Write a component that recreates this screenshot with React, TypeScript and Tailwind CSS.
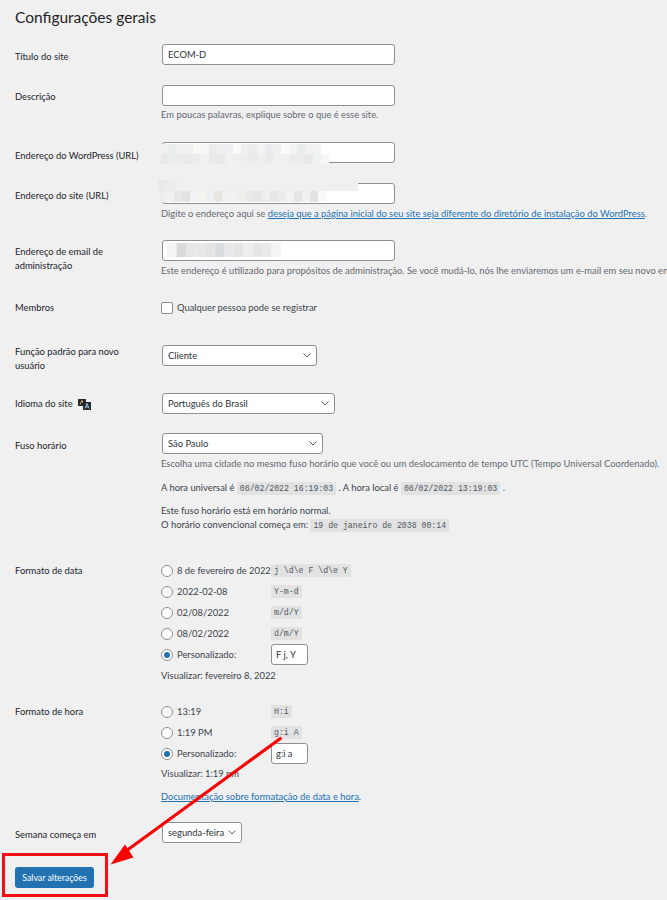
import type { ReactNode } from 'react';

const Row = ({ label, className, children }: { label: ReactNode; className: string; children: ReactNode }) => (
  <div className={`flex ${className}`}>
    <div className="w-[147px] shrink-0 pr-3 text-[#1d2327]">{label}</div>
    <div className="min-w-0 flex-1 whitespace-nowrap">{children}</div>
  </div>
);

const TextBox = ({ value = '', className = 'w-[233px] px-[5px]' }: { value?: string; className?: string }) => (
  <div className={`flex h-[21px] items-center rounded-[3px] border border-[#8c8f94] bg-white text-[#2c3338] ${className}`}>
    {value}
  </div>
);

const SelectBox = ({ value, className }: { value: string; className: string }) => (
  <div className={`flex h-[21px] items-center justify-between rounded-[3px] border border-[#8c8f94] bg-white pl-[5px] pr-[5px] text-[#2c3338] ${className}`}>
    <span>{value}</span>
    <svg width="8" height="5" viewBox="0 0 8 5" fill="none" stroke="#50575e" strokeWidth="1">
      <path d="M.5.5L4 4 7.500.5" />
    </svg>
  </div>
);

const Hint = ({ children, className = '' }: { children: ReactNode; className?: string }) => (
  <p className={`-ml-px leading-[13px] text-[#646970] ${className}`}>{children}</p>
);

const Code = ({ children }: { children: ReactNode }) => (
  <code className="bg-[#e2e2e3] px-[3px] py-[2px] font-['Liberation_Mono',monospace] text-[8.200px] leading-[9px] text-[#50575e]">{children}</code>
);

const Radio = ({ label, format, checked }: { label: string; format?: string; checked?: boolean }) => (
  <div className="flex h-[21px] items-center">
    <span className="-ml-px flex h-[12px] w-[12px] shrink-0 items-center justify-center rounded-full border border-[#8c8f94] bg-white">
      {checked && <span className="h-[6px] w-[6px] rounded-full bg-[#2271b1]" />}
    </span>
    <span className="ml-[4px] w-[94px] text-[#3c434a]">{label}</span>
    {format && <Code>{format}</Code>}
  </div>
);

// pixelated smudges that hide the URLs in the screenshot, one row of cells per line
const Smudge = ({ className, rows, cell, height }: { className: string; rows: string[][]; cell: number; height: number }) => (
  <svg className={`absolute ${className}`} width={Math.max(...rows.map((r) => r.length)) * cell} height={rows.length * height}>
    {rows.map((row, y) =>
      row.map((fill, x) => <rect key={`${y}-${x}`} x={x * cell} y={y * height} width={cell} height={height} fill={fill} />),
    )}
  </svg>
);

const wpTop = ['#f2f0ee', '#eaedf0', '#f0f0f0', '#eef0f2', '#f9f8f5', '#f5f6f7', '#ebecec', '#eeeeee', '#eceef1', '#fafafa', '#eff1f0', '#ebedec', '#f3f3f3', '#ebebf0', '#efefef', '#fafafa', '#f3f3f3', '#ebecee', '#f3f0f1', '#f0f2f4'];
const wpBottom = ['#e9e9e9', '#ecedee', '#ebebec', '#e9eaec', '#ececec', '#f2f2f2', '#e9ebea', '#e8e8e8', '#f0f1f1', '#eeeff0', '#edeeee', '#e9ebeb', '#eeeff1', '#e9eaea', '#f0f0f1', '#eff0f1', '#ebebec', '#ececec', '#e9e9e9', '#f0f1f2', '#f6f6f6'];
const siteTop = ['#e9e9e9', '#ececec', '#eeeeee', ...Array<string>(22).fill('#efefef')];
const siteBottom = ['#eeeeef', '#f0f1f1', '#e6e7e8', '#e2e3e3', '#f1f2f3', '#f4f4f1', '#eeeff1', '#e8e6e3', '#eff0f2', '#f1f1f2', '#eeeeea', '#e9e9e8', '#e5e6e5', '#eceef0', '#e5e6e7', '#eaecea', '#f2f2f2', '#e5e6e6', '#eff0f1', '#e3e3e3', '#f8f9f8'];
const emailRow = ['#f4f4f4', '#d9d9da', '#e6e6e6', '#e8e8e8', '#e3e3e3', '#d9dddf', '#e8e9e9', '#e3e4e5', '#eeeeee', '#e4e6e7', '#eaeaea', '#f5f5f5'];

export default function App() {
  return (
    <div className="relative h-[900px] w-[667px] overflow-hidden bg-[#f0f0f1] pl-[15px] font-['Lato',sans-serif] text-[9.400px] leading-[14px] text-[#3c434a]">
      <h1 className="pt-[8px] text-[15.500px] leading-[19px] text-[#1d2327]">Configurações gerais</h1>

      <Row label={<div className="pt-[6px]">Título do site</div>} className="mt-[17px]">
        <TextBox value="ECOM-D" />
      </Row>

      <Row label={<div className="pt-[5px]">Descrição</div>} className="mt-[20px]">
        <TextBox />
        <Hint className="mt-[2px]">Em poucas palavras, explique sobre o que é esse site.</Hint>
      </Row>

      <Row label={<div className="pt-[7px]">Endereço do WordPress (URL)</div>} className="mt-[21px]">
        <div className="relative">
          <TextBox />
          <Smudge className="left-[-1px] top-[2px]" rows={[wpTop, wpBottom]} cell={8} height={10} />
        </div>
      </Row>

      <Row label={<div className="pt-[6px]">Endereço do site (URL)</div>} className="mt-[20px]">
        <div className="relative">
          <TextBox />
          <Smudge className="left-[-4px] top-[-3px]" rows={[siteTop, siteBottom]} cell={8} height={11} />
        </div>
        <Hint className="mt-[3px]">
          Digite o endereço aqui se{' '}
          <a className="text-[#2271b1] underline">deseja que a página inicial do seu site seja diferente do diretório de instalação do WordPress</a>.
        </Hint>
      </Row>

      <Row label={<div className="pt-[5px]">Endereço de email de administração</div>} className="mt-[20px]">
        <div className="relative">
          <TextBox />
          <Smudge className="left-[5px] top-[3px]" rows={[emailRow]} cell={9.500} height={14} />
        </div>
        <Hint className="mt-[3px]">Este endereço é utilizado para propósitos de administração. Se você mudá-lo, nós lhe enviaremos um e-mail em seu novo endereço para confirmar.</Hint>
      </Row>

      <Row label="Membros" className="mt-[24px]">
        <div className="flex items-center">
          <span className="-ml-px h-[12px] w-[12px] rounded-[2px] border border-[#8c8f94] bg-white" />
          <span className="ml-[4px]">Qualquer pessoa pode se registrar</span>
        </div>
      </Row>

      <Row label="Função padrão para novo usuário" className="mt-[30px]">
        <SelectBox value="Cliente" className="w-[155px]" />
      </Row>

      <Row
        label={
          <div className="flex items-center gap-[5px] pt-[4px]">
            Idioma do site
            <svg width="13" height="11" viewBox="0 0 13 11">
              <rect x="0" y="0" width="8" height="7" fill="#1f2a33" />
              <path d="M2 5.500L4 1.500 6 5.500" fill="none" stroke="#e8a44a" strokeWidth="1" />
              <rect x="5" y="3" width="8" height="8" fill="#1f2a33" />
              <path d="M7 9.500L9 4.500 11 9.500M7.800 8h2.400" fill="none" stroke="#9fc4e0" strokeWidth="1" />
            </svg>
          </div>
        }
        className="mt-[20px]"
      >
        <SelectBox value="Português do Brasil" className="w-[173px]" />
      </Row>

      <Row label={<div className="pt-[6px]">Fuso horário</div>} className="mt-[19px]">
        <SelectBox value="São Paulo" className="w-[161px]" />
        <Hint className="mt-[3px]">Escolha uma cidade no mesmo fuso horário que você ou um deslocamento de tempo UTC (Tempo Universal Coordenado).</Hint>
        <p className="-ml-px mt-[11px]">
          A hora universal é <Code>08/02/2022 16:19:03</Code> . A hora local é <Code>08/02/2022 13:19:03</Code> .
        </p>
        <p className="-ml-px mt-[9px]">Este fuso horário está em horário normal.</p>
        <p className="-ml-px">
          O horário convencional começa em: <Code>19 de janeiro de 2038 00:14</Code>
        </p>
      </Row>

      <Row label={<div className="pt-[4px]">Formato de data</div>} className="mt-[28px]">
        <Radio label="8 de fevereiro de 2022" format="j \d\e F \d\e Y" />
        <Radio label="2022-02-08" format="Y-m-d" />
        <Radio label="02/08/2022" format="m/d/Y" />
        <Radio label="08/02/2022" format="d/m/Y" />
        <div className="flex h-[21px] items-center">
          <Radio label="Personalizado:" checked />
          <TextBox value="F j, Y" className="w-[37px] px-[4px]" />
        </div>
        <p className="-ml-px mt-[4px]">Visualizar: fevereiro 8, 2022</p>
      </Row>

      <Row label={<div className="pt-[4px]">Formato de hora</div>} className="mt-[18px]">
        <Radio label="13:19" format="H:i" />
        <Radio label="1:19 PM" format="g:i A" />
        <div className="flex h-[21px] items-center">
          <Radio label="Personalizado:" checked />
          <TextBox value="g:i a" className="w-[37px] px-[4px]" />
        </div>
        <p className="-ml-px mt-[3px]">Visualizar: 1:19 pm</p>
        <p className="-ml-px mt-[9px]">
          <a className="text-[#2271b1] underline">Documentação sobre formatação de data e hora</a>.
        </p>
      </Row>

      <Row label={<div className="pt-[6px]">Semana começa em</div>} className="mt-[18px]">
        <SelectBox value="segunda-feira" className="w-[80px]" />
      </Row>

      <button className="mt-[24px] flex h-[21px] w-[79px] items-center justify-center rounded-[3px] bg-[#2271b1] text-[8.800px] text-white">
        Salvar alterações
      </button>

      {/* annotation drawn over the page */}
      <div className="absolute left-[2px] top-[853px] h-[44px] w-[106px] border-[3px] border-[#f50f14]" />
      <svg className="absolute left-0 top-0" width="667" height="900" fill="#fa0000">
        <path d="M280.500 736.500l1.800 2.500-155 113-1.800-2.500z" />
        <path d="M110.500 864.500l14.500-20 8.500 13z" />
      </svg>
    </div>
  );
}
